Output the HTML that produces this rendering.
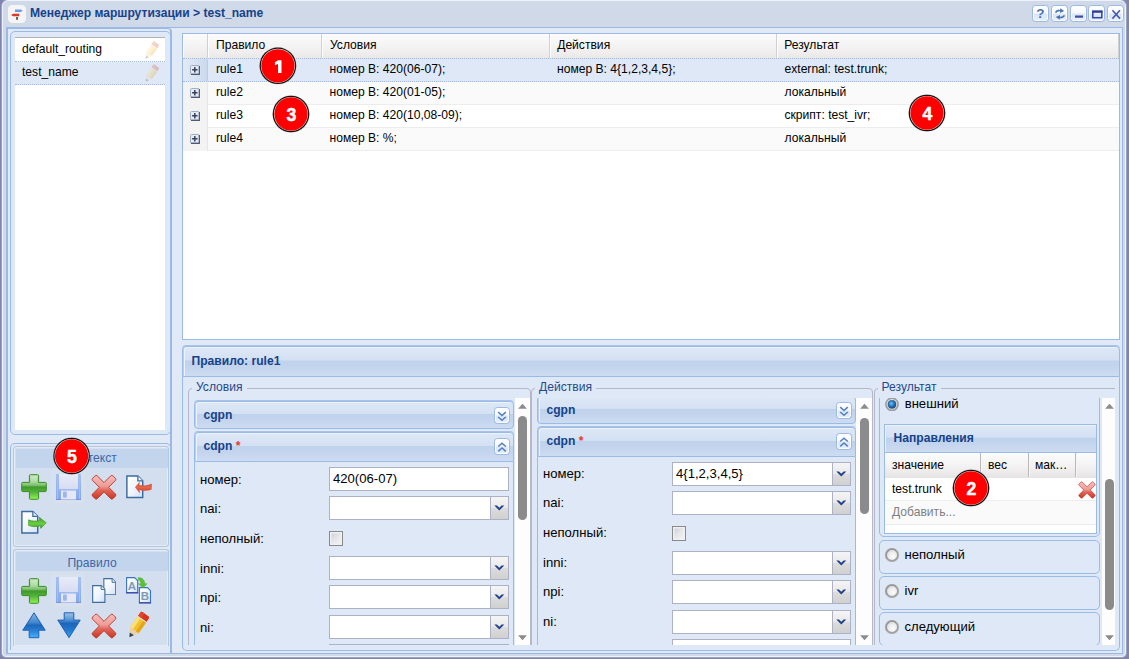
<!DOCTYPE html>
<html>
<head>
<meta charset="utf-8">
<title>Routing manager</title>
<style>
*{box-sizing:border-box;margin:0;padding:0}
html,body{width:1129px;height:659px;overflow:hidden}
body{background:#8184af;font-family:"Liberation Sans",sans-serif;font-size:12px;color:#000;position:relative}
.a{position:absolute}
.t{position:absolute;white-space:nowrap;line-height:14px;font-size:12.1px}
.t13{font-size:13.1px;line-height:15px}
.b{font-weight:bold;color:#15428b}
#win{left:2px;top:0;width:1124px;height:657px;background:#d0d9e8;border-radius:6px 6px 4px 4px;border:1px solid #eef2fc;box-shadow:0 0 0 1px rgba(158,168,192,.85)}
#winbody{left:6px;top:27px;width:1117px;height:627px;background:#e2e9f6;border:1px solid #9cb9e6;border-left-width:2px}
.hd{background:linear-gradient(#dde8f6 0%,#d4e1f3 45%,#bfd2ec 48%,#c4d5ee 72%,#cedcf1 100%);border:1px solid #99bbe8;box-shadow:0 -1px 0 #a9c3ea,inset 1px 0 0 #b9ceef,inset 2px 1px 0 #eef3fb}
.frame{border:1px solid #99bbe8;border-radius:5px;background:#dfe8f6}
.gh{top:0;height:24px;border-right:1px solid #d0d0d0;border-left:1px solid #fff}
.row{left:0;height:23px;border-top:1px solid #ededed;border-bottom:1px solid #ededed;background:#fff}
.row.alt{background:#fafafa}
.row.sel{z-index:1;background:#dfe8f6;border-top:1px dotted #a3bae9;border-bottom:1px dotted #a3bae9}
.exp{left:0;top:-1px;width:25px;height:23px;background:#f3f3f3;border-right:1px solid #e6e6e6}
.sel .exp{top:0!important;height:22px!important;background:linear-gradient(90deg,#e4ebf7,#cbd9ee);border-right-color:#b9cdef}
.badge{width:33px;height:33px;border-radius:50%;background:#fe0000;color:#fff;font-weight:bold;font-size:18px;line-height:34px;text-align:center;box-shadow:0 0 0 .7px #fff,0 0 0 1.8px #161616,0 0 0 2.4px rgba(190,190,190,.5)}
.inp{background:#fff;border:1px solid #aeb1c4;height:24px}
.trg{width:19px;height:24px;border:1px solid #aeb1c4;background:linear-gradient(#f5f5f5 0%,#e9e9e9 48%,#dcdcdc 52%,#d0d0d0 100%)}
.fs{border:1px solid #b5b8c8;border-radius:4px}
.lg{background:#dfe8f6;padding:0 4px;color:#234a8c}
.sbt{background:#fdfdfd}
.sbth{background:#8b8b8b;border-radius:5px}
.tool{width:16px;height:16px;border:1px solid #9cb8e6;border-radius:3.5px;background:linear-gradient(#ffffff 0%,#f6f9fe 48%,#d9e6fa 52%,#e6effc 100%);box-shadow:inset 0 0 0 1px rgba(255,255,255,.85)}
.rbox{border:1px solid #99bbe8;border-radius:5px;background:#dfe8f6}
.radio{width:14px;height:14px;border-radius:50%;border:2px solid #a2a2a2;border-top-color:#999;border-left-color:#999;background:radial-gradient(circle at 60% 65%,#fbfbfb 0%,#eeeeee 45%,#cfcfcf 100%)}
.cb{width:14px;height:15px;border:1px solid #8a8a8a;background:linear-gradient(135deg,#c6cad2 0%,#e6e7ea 50%,#f6f6f6 100%);box-shadow:inset 0 0 0 1.500px #f0f0f0}
.clip{overflow:hidden}
.ipanel{border:1px solid #b7c6d9;border-radius:3px;background:#d3dfef;box-shadow:inset 0 0 0 1px #e3ebf6}
.dbtn{width:34px;height:34px;border:1px solid #d9e0ea;border-radius:4px;background:rgba(220,228,240,.35)}
</style>
</head>
<body>
<svg width="0" height="0" style="position:absolute">
<defs>
<linearGradient id="gPlusV" x1="0" y1="0" x2="0" y2="1"><stop offset="0" stop-color="#c4e6bc"/><stop offset=".42" stop-color="#86c676"/><stop offset=".5" stop-color="#3f9a2c"/><stop offset=".72" stop-color="#55b53a"/><stop offset="1" stop-color="#93f555"/></linearGradient>
<linearGradient id="gX" x1="0" y1="0" x2="0" y2="1"><stop offset="0" stop-color="#f3bdbb"/><stop offset=".45" stop-color="#ee9d98"/><stop offset=".62" stop-color="#e2655a"/><stop offset="1" stop-color="#c93524"/></linearGradient>
<linearGradient id="gDoc" x1="0" y1="0" x2="1" y2="1"><stop offset="0" stop-color="#ffffff"/><stop offset=".5" stop-color="#f1f6fe"/><stop offset="1" stop-color="#cfe0fa"/></linearGradient>
<linearGradient id="gUp" x1="0" y1="0" x2="0" y2="1"><stop offset="0" stop-color="#8ab6e2"/><stop offset=".4" stop-color="#3f86cf"/><stop offset=".5" stop-color="#1c66bb"/><stop offset=".75" stop-color="#2b84d8"/><stop offset="1" stop-color="#45b6fa"/></linearGradient>
<linearGradient id="gDn" x1="0" y1="0" x2="0" y2="1"><stop offset="0" stop-color="#a3c4e6"/><stop offset=".3" stop-color="#4c8fd2"/><stop offset=".42" stop-color="#1c66bb"/><stop offset=".7" stop-color="#2379cf"/><stop offset="1" stop-color="#3aa5f5"/></linearGradient>
<linearGradient id="gFl" x1="0" y1="0" x2="0" y2="1"><stop offset="0" stop-color="#a9c0ee"/><stop offset="1" stop-color="#82a9ee"/></linearGradient>
<linearGradient id="gFl2" x1="0" y1="0" x2="0" y2="1"><stop offset="0" stop-color="#e8ebf8"/><stop offset="1" stop-color="#d6dcf2"/></linearGradient>
<linearGradient id="gGr" x1="0" y1="0" x2="0" y2="1"><stop offset="0" stop-color="#3f9f22"/><stop offset=".6" stop-color="#6bd044"/><stop offset="1" stop-color="#358f1a"/></linearGradient>
<radialGradient id="gRadio" cx=".42" cy=".4" r=".68"><stop offset="0" stop-color="#70c8fb"/><stop offset=".38" stop-color="#2f88cd"/><stop offset=".8" stop-color="#1d5089"/><stop offset="1" stop-color="#1c4a80"/></radialGradient>
<linearGradient id="gRd" x1="0" y1="0" x2="0" y2="1"><stop offset="0" stop-color="#dd4a30"/><stop offset=".5" stop-color="#e5664a"/><stop offset="1" stop-color="#cc3a26"/></linearGradient>
</defs></svg>
<div id="win" class="a"></div>
<div id="winbody" class="a"></div>
<svg class="a" style="left:8px;top:5px" width="18" height="18" viewBox="0 0 18 18"><rect width="18" height="18" rx="4.500" fill="#f5f5f5"/><path d="M7 4.400h5.800l1.900 1.350-1.900 1.350H7z" fill="#6a99f2"/><path d="M11.200 8.700H5.200L3.100 9.950l2.100 1.250h6z" fill="#e0352b"/><rect x="8.100" y="12" width="1.900" height="2.800" fill="#5a5a5a"/></svg>
<div class="t b" style="left:30px;top:5.5px;">Менеджер маршрутизации &gt; test_name</div>
<div class="a tool" style="left:1032px;top:5px;width:17px;height:17px"><svg class="a" style="left:-.5px;top:-.5px" width="16" height="16" viewBox="0 0 16 16"><text x="7.300" y="12" text-anchor="middle" font-family="Liberation Sans" font-weight="bold" font-size="13.500" fill="#4b73ad">?</text></svg></div>
<div class="a tool" style="left:1051px;top:5px;width:17px;height:17px"><svg class="a" style="left:-.5px;top:-.5px" width="16" height="16" viewBox="0 0 16 16"><path d="M3.600 6.600c1-2.200 4-2.600 6-1.300" fill="none" stroke="#4b73ad" stroke-width="1.600"/><path d="M8.300 2.300l3.900 2.700-4.200 2.100z" fill="#4b73ad"/><path d="M12.400 9.400c-1 2.200-4 2.600-6 1.300" fill="none" stroke="#4b73ad" stroke-width="1.600"/><path d="M7.700 13.700l-3.900-2.700 4.200-2.100z" fill="#4b73ad"/></svg></div>
<div class="a tool" style="left:1070px;top:5px;width:17px;height:17px"><svg class="a" style="left:-.5px;top:-.5px" width="16" height="16" viewBox="0 0 16 16"><rect x="4" y="9.500" width="8" height="2.200" fill="#3e4c9c"/></svg></div>
<div class="a tool" style="left:1088px;top:5px;width:17px;height:17px"><svg class="a" style="left:-.5px;top:-.5px" width="16" height="16" viewBox="0 0 16 16"><rect x="3.800" y="5.300" width="9" height="6.400" fill="none" stroke="#3444a0" stroke-width="1.500"/><rect x="3.100" y="4.600" width="10.400" height="2.200" fill="#2f3f9c"/></svg></div>
<div class="a tool" style="left:1107px;top:5px;width:17px;height:17px"><svg class="a" style="left:-.5px;top:-.5px" width="16" height="16" viewBox="0 0 16 16"><path d="M4.400 4.200l7.600 8.400M12 4.200l-7.600 8.400" stroke="#4a58a8" stroke-width="1.600" fill="none"/></svg></div>
<div class="a " style="left:8px;top:28px;width:164px;height:626px;border-top:1px solid #9cb9e6;border-right:2px solid #9cb9e6;border-radius:0 4px 0 0"></div>
<div class="a frame" style="left:10px;top:31px;width:161px;height:404px;"></div>
<div class="a " style="left:15px;top:37px;width:150px;height:393px;background:#fff;border-top:1px solid #b2b2b2"></div>
<div class="a " style="left:15px;top:38px;width:150px;height:24px;background:#fff;border-bottom:1px dotted #a3bae9"></div>
<div class="a " style="left:15px;top:62px;width:150px;height:23px;background:#dfe8f6;border-bottom:1px dotted #a3bae9"></div>
<div class="t " style="left:22px;top:41.5px;">default_routing</div>
<div class="t " style="left:22px;top:64.5px;">test_name</div>
<svg class="a" style="left:144px;top:41px;opacity:.24" width="15" height="19" viewBox="0 0 20 26"><g transform="rotate(35 10 13)"><path d="M5.200 2.300a1.600 1.600 0 0 1 1.600-1.600h6.400a1.600 1.600 0 0 1 1.600 1.600V6.100H5.200z" fill="#d7341d"/><path d="M5.200 2.300a1.600 1.600 0 0 1 1.600-1.600h2.200V6.100H5.200z" fill="#e0452c"/><rect x="5.200" y="6.100" width="9.600" height=".9" fill="#efe9d8"/><rect x="5.200" y="7" width="9.600" height="12" fill="#f3c12b"/><rect x="5.200" y="7" width="3.200" height="12" fill="#fbdf78"/><rect x="11.800" y="7" width="3" height="12" fill="#e3a51a"/><path d="M5.200 19h9.600L10 26.800z" fill="#ead0a6"/><path d="M7.700 23l2.300 3.900 2.300-3.900z" fill="#33414f"/></g></svg>
<svg class="a" style="left:144px;top:64px;opacity:.24" width="15" height="19" viewBox="0 0 20 26"><g transform="rotate(35 10 13)"><path d="M5.200 2.300a1.600 1.600 0 0 1 1.600-1.600h6.400a1.600 1.600 0 0 1 1.600 1.600V6.100H5.200z" fill="#d7341d"/><path d="M5.200 2.300a1.600 1.600 0 0 1 1.600-1.600h2.200V6.100H5.200z" fill="#e0452c"/><rect x="5.200" y="6.100" width="9.600" height=".9" fill="#efe9d8"/><rect x="5.200" y="7" width="9.600" height="12" fill="#f3c12b"/><rect x="5.200" y="7" width="3.200" height="12" fill="#fbdf78"/><rect x="11.800" y="7" width="3" height="12" fill="#e3a51a"/><path d="M5.200 19h9.600L10 26.800z" fill="#ead0a6"/><path d="M7.700 23l2.300 3.900 2.300-3.900z" fill="#33414f"/></g></svg>
<div class="a frame" style="left:10px;top:443px;width:161px;height:207px;border-bottom:0;border-radius:5px 5px 0 0"></div>
<div class="a ipanel" style="left:13px;top:446px;width:156px;height:101px;"></div>
<div class="a " style="left:16px;top:449px;width:152px;height:19px;background:#c3d5ed"></div>
<div class="t " style="left:16px;top:451px;width:152px;text-align:center;color:#3d66a5">Контекст</div>
<div class="a ipanel" style="left:13px;top:549px;width:156px;height:97px;border-bottom:0;border-radius:3px 3px 0 0"></div>
<div class="a " style="left:16px;top:552px;width:152px;height:19px;background:#c3d5ed"></div>
<div class="t " style="left:16px;top:555.5px;width:152px;text-align:center;color:#3d66a5">Правило</div>
<svg class="a" style="left:20.5px;top:473.7px;" width="26" height="26" viewBox="0 0 26 26"><path d="M9.400 .7h7.200a1 1 0 0 1 1 1v6.700h6.700a1 1 0 0 1 1 1v7.200a1 1 0 0 1-1 1h-6.700v6.700a1 1 0 0 1-1 1H9.400a1 1 0 0 1-1-1v-6.700H1.700a1 1 0 0 1-1-1V9.400a1 1 0 0 1 1-1h6.700V1.700a1 1 0 0 1 1-1z" fill="url(#gPlusV)" stroke="#3c8c2b" stroke-width="1"/><path d="M9.900 2h6.200v6.400h-6.200z" fill="#fff" opacity=".22"/></svg>
<div class="a dbtn" style="left:51px;top:469px;width:34px;height:34px;"></div>
<svg class="a" style="left:56px;top:474px" width="25" height="26" viewBox="0 0 25 26"><path d="M0 0h25v26H0z" fill="url(#gFl)"/><path d="M0 25h25v1H0z" fill="#7f8fe0"/><path d="M1.500 0v25M23.500 0v25" stroke="#a9bdea" stroke-width="1"/><rect x="3" y="0" width="19" height="15.200" fill="url(#gFl2)"/><rect x="5" y="16.500" width="15" height="9" fill="#e4e7f6"/><rect x="7" y="17.500" width="3.800" height="6.200" rx="1" fill="#9db6e6"/></svg>
<svg class="a" style="left:90.5px;top:473.5px;" width="26" height="26.5" viewBox="0 0 26 26"><path d="M19.65 1.69Q20.85 0.48 22.05 1.69L24.31 3.95Q25.52 5.15 24.31 6.35L17.67 13.00L24.31 19.65Q25.52 20.85 24.31 22.05L22.05 24.31Q20.85 25.52 19.65 24.31L13.00 17.67L6.35 24.31Q5.15 25.52 3.95 24.31L1.69 22.05Q0.48 20.85 1.69 19.65L8.33 13.00L1.69 6.35Q0.48 5.15 1.69 3.95L3.95 1.69Q5.15 0.48 6.35 1.69L13.00 8.33z" fill="url(#gX)" stroke="#b93623" stroke-width=".9"/></svg>
<svg class="a" style="left:126px;top:475px;" width="17.5" height="23.5" viewBox="0 0 18 24"><path d="M.9 .9h11.300l5 5V23.100H.9z" fill="url(#gDoc)" stroke="#3d6c9c" stroke-width="1.500"/><path d="M12.200 .9v5h5" fill="#e8f0fb" stroke="#3d6c9c" stroke-width="1.300"/></svg>
<svg class="a" style="left:135px;top:482.3px" width="17" height="11" viewBox="0 0 17 11"><path d="M.3 5.300L4.400 .4 4 3.300c4 .9 8.500 .5 12.600-1.300l-.3 5.400C12 8.700 8 8.600 4.100 7.700l.6 3z" fill="url(#gRd)" stroke="#d44a30" stroke-width=".5"/></svg>
<svg class="a" style="left:21px;top:510px;" width="17.5" height="24.5" viewBox="0 0 18 24"><path d="M.9 .9h11.300l5 5V23.100H.9z" fill="url(#gDoc)" stroke="#3d6c9c" stroke-width="1.500"/><path d="M12.200 .9v5h5" fill="#e8f0fb" stroke="#3d6c9c" stroke-width="1.300"/></svg>
<svg class="a" style="left:28px;top:517.3px" width="19" height="12" viewBox="0 0 19 12"><path d="M.4 2.800c3.600 1.500 7.600 1.500 11.400 .6L11.300 .3 18.300 5.800 12.700 11.400l-.4-2.700C8.200 10 4.200 10 .5 8.600z" fill="url(#gGr)" stroke="#358f1a" stroke-width=".5"/></svg>
<svg class="a" style="left:20.5px;top:577.5px;" width="26" height="26" viewBox="0 0 26 26"><path d="M9.400 .7h7.200a1 1 0 0 1 1 1v6.700h6.700a1 1 0 0 1 1 1v7.200a1 1 0 0 1-1 1h-6.700v6.700a1 1 0 0 1-1 1H9.400a1 1 0 0 1-1-1v-6.700H1.700a1 1 0 0 1-1-1V9.400a1 1 0 0 1 1-1h6.700V1.700a1 1 0 0 1 1-1z" fill="url(#gPlusV)" stroke="#3c8c2b" stroke-width="1"/><path d="M9.900 2h6.200v6.400h-6.200z" fill="#fff" opacity=".22"/></svg>
<div class="a dbtn" style="left:51px;top:572.5px;width:34px;height:34px;"></div>
<svg class="a" style="left:56px;top:577px" width="25" height="26" viewBox="0 0 25 26"><path d="M0 0h25v26H0z" fill="url(#gFl)"/><path d="M0 25h25v1H0z" fill="#7f8fe0"/><path d="M1.500 0v25M23.500 0v25" stroke="#a9bdea" stroke-width="1"/><rect x="3" y="0" width="19" height="15.200" fill="url(#gFl2)"/><rect x="5" y="16.500" width="15" height="9" fill="#e4e7f6"/><rect x="7" y="17.500" width="3.800" height="6.200" rx="1" fill="#9db6e6"/></svg>
<svg class="a" style="left:102.5px;top:577.5px;" width="13.5" height="17.5" viewBox="0 0 18 24"><path d="M.9 .9h11.300l5 5V23.100H.9z" fill="url(#gDoc)" stroke="#3d6c9c" stroke-width="1.500"/><path d="M12.200 .9v5h5" fill="#e8f0fb" stroke="#3d6c9c" stroke-width="1.300"/></svg>
<svg class="a" style="left:92px;top:585px;" width="13.5" height="18" viewBox="0 0 18 24"><path d="M.9 .9h11.300l5 5V23.100H.9z" fill="url(#gDoc)" stroke="#3d6c9c" stroke-width="1.500"/><path d="M12.200 .9v5h5" fill="#e8f0fb" stroke="#3d6c9c" stroke-width="1.300"/></svg>
<svg class="a" style="left:126px;top:577px" width="26" height="27" viewBox="0 0 26 27"><path d="M.6 .6h8l3.100 3.100V15.700H.6z" fill="url(#gDoc)" stroke="#3a70c4" stroke-width="1.100"/><path d="M.2 15.800h12" stroke="#3b3fa6" stroke-width="1.200"/><text x="5.800" y="12.800" text-anchor="middle" font-family="Liberation Sans" font-weight="bold" font-size="11.500" fill="#7d9bb3">A</text><path d="M13.400 10.600h8l3.100 3.100V25.700H13.400z" fill="url(#gDoc)" stroke="#3a70c4" stroke-width="1.100"/><path d="M13 25.900h12" stroke="#3b3fa6" stroke-width="1.200"/><text x="18.900" y="23" text-anchor="middle" font-family="Liberation Sans" font-weight="bold" font-size="11.500" fill="#7d9bb3">B</text><path d="M12.300 .5c4.200 .2 6.400 2.600 6.600 6.200h2.200L16.900 11 12.600 6.700h2.300c-.2-2-1.100-3.300-2.800-3.900z" fill="#58c232" stroke="#48aa28" stroke-width=".4"/></svg>
<svg class="a" style="left:22px;top:612px" width="24" height="26.500" viewBox="0 0 24 26.500"><path d="M12 .8L23.200 18.200H16.800v7.500H7.200v-7.500H.8z" fill="url(#gUp)" stroke="#1d5fb2" stroke-width="1" stroke-linejoin="round"/></svg>
<svg class="a" style="left:57px;top:612px" width="24" height="26.500" viewBox="0 0 24 26.500"><path d="M7.200 .8h9.600v7.300h6.400L12 25.700 .8 8.100h6.400z" fill="url(#gDn)" stroke="#1d5fb2" stroke-width="1" stroke-linejoin="round"/></svg>
<svg class="a" style="left:90.5px;top:612.5px;" width="26" height="26" viewBox="0 0 26 26"><path d="M19.65 1.69Q20.85 0.48 22.05 1.69L24.31 3.95Q25.52 5.15 24.31 6.35L17.67 13.00L24.31 19.65Q25.52 20.85 24.31 22.05L22.05 24.31Q20.85 25.52 19.65 24.31L13.00 17.67L6.35 24.31Q5.15 25.52 3.95 24.31L1.69 22.05Q0.48 20.85 1.69 19.65L8.33 13.00L1.69 6.35Q0.48 5.15 1.69 3.95L3.95 1.69Q5.15 0.48 6.35 1.69L13.00 8.33z" fill="url(#gX)" stroke="#b93623" stroke-width=".9"/></svg>
<svg class="a" style="left:126.5px;top:611px;" width="22" height="28" viewBox="0 0 20 26"><g transform="rotate(35 10 13)"><path d="M5.200 2.300a1.600 1.600 0 0 1 1.600-1.600h6.400a1.600 1.600 0 0 1 1.600 1.600V6.100H5.200z" fill="#d7341d"/><path d="M5.200 2.300a1.600 1.600 0 0 1 1.600-1.600h2.200V6.100H5.200z" fill="#e0452c"/><rect x="5.200" y="6.100" width="9.600" height=".9" fill="#efe9d8"/><rect x="5.200" y="7" width="9.600" height="12" fill="#f3c12b"/><rect x="5.200" y="7" width="3.200" height="12" fill="#fbdf78"/><rect x="11.800" y="7" width="3" height="12" fill="#e3a51a"/><path d="M5.200 19h9.600L10 26.800z" fill="#ead0a6"/><path d="M7.700 23l2.300 3.900 2.300-3.900z" fill="#33414f"/></g></svg>
<div class="a" style="left:182px;top:33px;width:938px;height:307px;border:1px solid #99bbe8;background:#fff">
<div class="a" style="left:0;top:0;width:936px;height:25px;background:linear-gradient(#fcfcfc,#f4f3f3 50%,#ebe8e8);border-bottom:1px solid #d0d0d0"></div>
<div class="a gh" style="left:0px;width:25px"></div>
<div class="a gh" style="left:25px;width:114px"></div>
<div class="t" style="left:33px;top:4px">Правило</div>
<div class="a gh" style="left:139px;width:228px"></div>
<div class="t" style="left:147px;top:4px">Условия</div>
<div class="a gh" style="left:367px;width:227px"></div>
<div class="t" style="left:374.2px;top:4px">Действия</div>
<div class="a gh" style="left:594px;width:342px"></div>
<div class="t" style="left:601.2px;top:4px">Результат</div>
<div class="a row sel" style="top:24px;width:936px;height:24px">
<div class="a exp" style="height:24px"></div>
<svg class="a" style="left:7px;top:6px" width="10" height="10" viewBox="0 0 10 10"><rect x=".5" y=".5" width="8.600" height="8.600" rx="1" fill="#e6eaf2" stroke="#a3aec1"/><path d="M1 9.400h8.400V1" fill="none" stroke="#4a5977" stroke-width="1.100"/><path d="M2.100 4.800h5.400M4.800 2.100v5.400" stroke="#34425f" stroke-width="1.500"/></svg>
<div class="t" style="left:33px;top:3px">rule1</div>
<div class="t" style="left:146.5px;top:3px">номер B: 420(06-07);</div>
<div class="t" style="left:374px;top:3px">номер B: 4{1,2,3,4,5};</div>
<div class="t" style="left:601.5px;top:3px">external: test.trunk;</div>
</div>
<div class="a row alt" style="top:47px;width:936px;height:24px">
<div class="a exp" style="height:24px"></div>
<svg class="a" style="left:7px;top:6px" width="10" height="10" viewBox="0 0 10 10"><rect x=".5" y=".5" width="8.600" height="8.600" rx="1" fill="#e6eaf2" stroke="#a3aec1"/><path d="M1 9.400h8.400V1" fill="none" stroke="#4a5977" stroke-width="1.100"/><path d="M2.100 4.800h5.400M4.800 2.100v5.400" stroke="#34425f" stroke-width="1.500"/></svg>
<div class="t" style="left:33px;top:3px">rule2</div>
<div class="t" style="left:146.5px;top:3px">номер B: 420(01-05);</div>
<div class="t" style="left:601.5px;top:3px">локальный</div>
</div>
<div class="a row " style="top:70px;width:936px;height:24px">
<div class="a exp" style="height:24px"></div>
<svg class="a" style="left:7px;top:6px" width="10" height="10" viewBox="0 0 10 10"><rect x=".5" y=".5" width="8.600" height="8.600" rx="1" fill="#e6eaf2" stroke="#a3aec1"/><path d="M1 9.400h8.400V1" fill="none" stroke="#4a5977" stroke-width="1.100"/><path d="M2.100 4.800h5.400M4.800 2.100v5.400" stroke="#34425f" stroke-width="1.500"/></svg>
<div class="t" style="left:33px;top:3px">rule3</div>
<div class="t" style="left:146.5px;top:3px">номер B: 420(10,08-09);</div>
<div class="t" style="left:601.5px;top:3px">скрипт: test_ivr;</div>
</div>
<div class="a row alt" style="top:93px;width:936px;height:24px">
<div class="a exp" style="height:24px"></div>
<svg class="a" style="left:7px;top:6px" width="10" height="10" viewBox="0 0 10 10"><rect x=".5" y=".5" width="8.600" height="8.600" rx="1" fill="#e6eaf2" stroke="#a3aec1"/><path d="M1 9.400h8.400V1" fill="none" stroke="#4a5977" stroke-width="1.100"/><path d="M2.100 4.800h5.400M4.800 2.100v5.400" stroke="#34425f" stroke-width="1.500"/></svg>
<div class="t" style="left:33px;top:3px">rule4</div>
<div class="t" style="left:146.5px;top:3px">номер B: %;</div>
<div class="t" style="left:601.5px;top:3px">локальный</div>
</div>
</div>
<div class="a hd" style="left:182px;top:346px;width:938px;height:31px;border-radius:4px 4px 0 0"></div>
<div class="t b" style="left:191.5px;top:353.5px;">Правило: rule1</div>
<div class="a " style="left:182px;top:377px;width:938px;height:274px;border:1px solid #99bbe8;border-top:0;border-radius:0 0 5px 5px;background:#dfe8f6"></div>
<div class="a clip" style="left:183px;top:377px;width:936px;height:268px"><div class="a" style="left:-183px;top:-377px;width:1129px;height:659px">
<div class="a fs" style="left:188px;top:388px;width:343px;height:269px;"></div>
<div class="t lg" style="left:192px;top:380px">Условия</div>
<div class="a clip" style="left:192px;top:398px;width:324px;height:247px">
<div class="a hd" style="left:2px;top:3px;width:320px;height:28px;border-radius:4px">
<div class="t b" style="left:8.500px;top:6px">cgpn</div>
<div class="a tool" style="left:299px;top:5px;width:16px;height:17px"><svg class="a" style="left:1px;top:1px" width="12" height="14" viewBox="0 0 12 14"><path d="M2.200 3.200l3.800 3.300 3.800-3.300M2.200 8l3.800 3.300 3.800-3.300" fill="none" stroke="#5580bb" stroke-width="1.600"/></svg></div>
</div>
<div class="a hd" style="left:2px;top:34px;width:320px;height:30px;border-radius:4px 4px 0 0">
<div class="t b" style="left:8.500px;top:6px">cdpn <span style="color:#e8392c">*</span></div>
<div class="a tool" style="left:299px;top:5px;width:16px;height:17px"><svg class="a" style="left:1px;top:1px" width="12" height="14" viewBox="0 0 12 14"><path d="M2.200 6.500l3.800-3.300 3.800 3.300M2.200 11.300l3.800-3.300 3.800 3.300" fill="none" stroke="#5580bb" stroke-width="1.600"/></svg></div>
</div>
<div class="a" style="left:2px;top:64px;width:320px;height:300px;border:1px solid #99bbe8;border-top:0;background:#dfe8f6"></div>
<div class="t t13" style="left:8px;top:74px">номер:</div>
<div class="a inp" style="left:137px;top:69px;width:180px"></div>
<div class="t t13" style="left:141px;top:73px">420(06-07)</div>
<div class="t t13" style="left:8px;top:103px">nai:</div>
<div class="a inp" style="left:137px;top:98px;width:163px"></div>
<div class="a trg" style="left:298px;top:98px"><svg class="a" style="left:3px;top:7.500px" width="11" height="7" viewBox="0 0 11 7"><path d="M.3 .4h2.700L5.300 2.700 7.600 .4h2.700L5.300 5.600z" fill="#23408c"/></svg></div>
<div class="t t13" style="left:8px;top:133px">неполный:</div>
<div class="a cb" style="left:137px;top:133px"></div>
<div class="t t13" style="left:8px;top:163px">inni:</div>
<div class="a inp" style="left:137px;top:158px;width:163px"></div>
<div class="a trg" style="left:298px;top:158px"><svg class="a" style="left:3px;top:7.500px" width="11" height="7" viewBox="0 0 11 7"><path d="M.3 .4h2.700L5.300 2.700 7.600 .4h2.700L5.300 5.600z" fill="#23408c"/></svg></div>
<div class="t t13" style="left:8px;top:192px">npi:</div>
<div class="a inp" style="left:137px;top:187px;width:163px"></div>
<div class="a trg" style="left:298px;top:187px"><svg class="a" style="left:3px;top:7.500px" width="11" height="7" viewBox="0 0 11 7"><path d="M.3 .4h2.700L5.300 2.700 7.600 .4h2.700L5.300 5.600z" fill="#23408c"/></svg></div>
<div class="t t13" style="left:8px;top:222px">ni:</div>
<div class="a inp" style="left:137px;top:217px;width:163px"></div>
<div class="a trg" style="left:298px;top:217px"><svg class="a" style="left:3px;top:7.500px" width="11" height="7" viewBox="0 0 11 7"><path d="M.3 .4h2.700L5.300 2.700 7.600 .4h2.700L5.300 5.600z" fill="#23408c"/></svg></div>
<div class="a inp" style="left:137px;top:246px;width:180px"></div>
</div>
<div class="a sbt" style="left:515px;top:398px;width:15px;height:247px;"></div>
<svg class="a" style="left:517px;top:403px" width="11" height="6" viewBox="0 0 11 6"><path d="M1.1 5.800L5.5 .8 9.9 5.800z" fill="#8b8b8b"/></svg>
<svg class="a" style="left:517px;top:635px" width="11" height="6" viewBox="0 0 11 6"><path d="M1.1 .2L5.5 5.200 9.9 .2z" fill="#8b8b8b"/></svg>
<div class="a sbth" style="left:518px;top:416px;width:9px;height:104px;"></div>
<div class="a fs" style="left:531px;top:388px;width:342px;height:269px;"></div>
<div class="t lg" style="left:535px;top:380px">Действия</div>
<div class="a clip" style="left:535px;top:398px;width:323px;height:247px">
<div class="a hd" style="left:2px;top:-2px;width:319px;height:28px;border-radius:4px">
<div class="t b" style="left:8.500px;top:6px">cgpn</div>
<div class="a tool" style="left:298px;top:5px;width:16px;height:17px"><svg class="a" style="left:1px;top:1px" width="12" height="14" viewBox="0 0 12 14"><path d="M2.200 3.200l3.800 3.300 3.800-3.300M2.200 8l3.800 3.300 3.800-3.300" fill="none" stroke="#5580bb" stroke-width="1.600"/></svg></div>
</div>
<div class="a hd" style="left:2px;top:29px;width:319px;height:30px;border-radius:4px 4px 0 0">
<div class="t b" style="left:8.500px;top:6px">cdpn <span style="color:#e8392c">*</span></div>
<div class="a tool" style="left:298px;top:5px;width:16px;height:17px"><svg class="a" style="left:1px;top:1px" width="12" height="14" viewBox="0 0 12 14"><path d="M2.200 6.500l3.800-3.300 3.800 3.300M2.200 11.300l3.800-3.300 3.800 3.300" fill="none" stroke="#5580bb" stroke-width="1.600"/></svg></div>
</div>
<div class="a" style="left:2px;top:59px;width:319px;height:300px;border:1px solid #99bbe8;border-top:0;background:#dfe8f6"></div>
<div class="t t13" style="left:8px;top:68px">номер:</div>
<div class="a inp" style="left:137px;top:64px;width:162px"></div>
<div class="a trg" style="left:297px;top:64px"><svg class="a" style="left:3px;top:7.500px" width="11" height="7" viewBox="0 0 11 7"><path d="M.3 .4h2.700L5.300 2.700 7.600 .4h2.700L5.300 5.600z" fill="#23408c"/></svg></div>
<div class="t t13" style="left:141px;top:68px">4{1,2,3,4,5}</div>
<div class="t t13" style="left:8px;top:97px">nai:</div>
<div class="a inp" style="left:137px;top:93px;width:162px"></div>
<div class="a trg" style="left:297px;top:93px"><svg class="a" style="left:3px;top:7.500px" width="11" height="7" viewBox="0 0 11 7"><path d="M.3 .4h2.700L5.300 2.700 7.600 .4h2.700L5.300 5.600z" fill="#23408c"/></svg></div>
<div class="t t13" style="left:8px;top:127px">неполный:</div>
<div class="a cb" style="left:137px;top:128px"></div>
<div class="t t13" style="left:8px;top:157px">inni:</div>
<div class="a inp" style="left:137px;top:153px;width:162px"></div>
<div class="a trg" style="left:297px;top:153px"><svg class="a" style="left:3px;top:7.500px" width="11" height="7" viewBox="0 0 11 7"><path d="M.3 .4h2.700L5.300 2.700 7.600 .4h2.700L5.300 5.600z" fill="#23408c"/></svg></div>
<div class="t t13" style="left:8px;top:186px">npi:</div>
<div class="a inp" style="left:137px;top:182px;width:162px"></div>
<div class="a trg" style="left:297px;top:182px"><svg class="a" style="left:3px;top:7.500px" width="11" height="7" viewBox="0 0 11 7"><path d="M.3 .4h2.700L5.300 2.700 7.600 .4h2.700L5.300 5.600z" fill="#23408c"/></svg></div>
<div class="t t13" style="left:8px;top:216px">ni:</div>
<div class="a inp" style="left:137px;top:212px;width:162px"></div>
<div class="a trg" style="left:297px;top:212px"><svg class="a" style="left:3px;top:7.500px" width="11" height="7" viewBox="0 0 11 7"><path d="M.3 .4h2.700L5.300 2.700 7.600 .4h2.700L5.300 5.600z" fill="#23408c"/></svg></div>
<div class="a inp" style="left:137px;top:241px;width:179px"></div>
</div>
<div class="a sbt" style="left:856px;top:398px;width:16px;height:247px;"></div>
<svg class="a" style="left:859px;top:403px" width="11" height="6" viewBox="0 0 11 6"><path d="M1.1 5.800L5.5 .8 9.9 5.800z" fill="#8b8b8b"/></svg>
<svg class="a" style="left:859px;top:635px" width="11" height="6" viewBox="0 0 11 6"><path d="M1.1 .2L5.5 5.200 9.9 .2z" fill="#8b8b8b"/></svg>
<div class="a sbth" style="left:860px;top:418px;width:9px;height:96px;"></div>
<div class="a fs" style="left:874px;top:388px;width:245px;height:269px;"></div>
<div class="t lg" style="left:877.5px;top:380px">Результат</div>
<div class="a " style="left:1115px;top:380px;width:4px;height:266px;background:#dfe8f6"></div>
<div class="a sbt" style="left:1102px;top:398px;width:13px;height:247px;"></div>
<svg class="a" style="left:1104px;top:403px" width="11" height="6" viewBox="0 0 11 6"><path d="M1.1 5.800L5.5 .8 9.9 5.800z" fill="#8b8b8b"/></svg>
<svg class="a" style="left:1104px;top:635px" width="11" height="6" viewBox="0 0 11 6"><path d="M1.1 .2L5.5 5.200 9.9 .2z" fill="#8b8b8b"/></svg>
<div class="a sbth" style="left:1105px;top:479px;width:9px;height:131px;"></div>
<div class="a clip" style="left:878px;top:398px;width:223px;height:247px">
<div class="a rbox" style="left:1px;top:-10px;width:221px;height:149px"></div>
<svg class="a" style="left:7px;top:-1px" width="14" height="14" viewBox="0 0 14 14"><circle cx="7" cy="7.300" r="6.100" fill="#ececec" stroke="#9c9c9c" stroke-width="1.600"/><circle cx="7" cy="7.400" r="4.100" fill="url(#gRadio)" stroke="#1d4c84" stroke-width=".4"/></svg>
<div class="t t13" style="left:26.700px;top:-2px">внешний</div>
<div class="a hd" style="left:6px;top:26px;width:213px;height:29px;box-shadow:inset 1px 1px 0 #eef3fb"></div>
<div class="t b" style="left:15.500px;top:33px">Направления</div>
<div class="a" style="left:6px;top:55px;width:213px;height:81px;border:1px solid #99bbe8;border-top:0;background:#fff"></div>
<div class="a" style="left:7px;top:55px;width:211px;height:25px;background:linear-gradient(#fcfcfc,#f4f3f3 50%,#e6e3e3)"></div>
<div class="a" style="left:102px;top:55px;width:2px;height:24px;border-left:1px solid #b9b9b9;border-right:1px solid #f6f6f6"></div>
<div class="a" style="left:149.5px;top:55px;width:2px;height:24px;border-left:1px solid #b9b9b9;border-right:1px solid #f6f6f6"></div>
<div class="a" style="left:197px;top:55px;width:2px;height:24px;border-left:1px solid #b9b9b9;border-right:1px solid #f6f6f6"></div>
<div class="t" style="left:14px;top:60px">значение</div>
<div class="t" style="left:110px;top:60px">вес</div>
<div class="t" style="left:157px;top:60px">мак…</div>
<div class="a" style="left:7px;top:80px;width:211px;height:23px;background:#fff;border-bottom:1px solid #ededed"></div>
<div class="t" style="left:14px;top:84px">test.trunk</div>
<svg class="a" style="left:200px;top:83px;" width="18" height="18" viewBox="0 0 26 26"><path d="M19.65 1.69Q20.85 0.48 22.05 1.69L24.31 3.95Q25.52 5.15 24.31 6.35L17.67 13.00L24.31 19.65Q25.52 20.85 24.31 22.05L22.05 24.31Q20.85 25.52 19.65 24.31L13.00 17.67L6.35 24.31Q5.15 25.52 3.95 24.31L1.69 22.05Q0.48 20.85 1.69 19.65L8.33 13.00L1.69 6.35Q0.48 5.15 1.69 3.95L3.95 1.69Q5.15 0.48 6.35 1.69L13.00 8.33z" fill="url(#gX)" stroke="#b93623" stroke-width=".9"/></svg>
<div class="a" style="left:7px;top:103px;width:211px;height:24px;background:#fafafa;border-bottom:1px solid #ededed"></div>
<div class="t" style="left:14px;top:107px;color:#7f7f7f">Добавить...</div>
<div class="a rbox" style="left:1px;top:142px;width:221px;height:34px"></div>
<div class="a radio" style="left:7px;top:150px"></div>
<div class="t t13" style="left:26.500px;top:149px">неполный</div>
<div class="a rbox" style="left:1px;top:178px;width:221px;height:34px"></div>
<div class="a radio" style="left:7px;top:186px"></div>
<div class="t t13" style="left:26.500px;top:185px">ivr</div>
<div class="a rbox" style="left:1px;top:214px;width:221px;height:34px"></div>
<div class="a radio" style="left:7px;top:222px"></div>
<div class="t t13" style="left:26.500px;top:221px">следующий</div>
</div>
</div></div>
<svg class="a" style="left:256px;top:44px;z-index:9" width="42" height="42"><circle cx="21.9" cy="21.8" r="18.800" fill="#bdbdbd" opacity=".5"/><circle cx="21.9" cy="21.8" r="18.300" fill="#141414"/><circle cx="21.9" cy="21.8" r="17.050" fill="#fff"/><circle cx="21.9" cy="21.8" r="16.650" fill="#fe0000"/><path transform="translate(21.9 21.8)" d="M.2-5.600H3.600V7.100H.1V-1.900L-3-.5V-3.500z" fill="#fff"/></svg>
<svg class="a" style="left:270px;top:93px;z-index:9" width="42" height="42"><circle cx="21" cy="21" r="18.800" fill="#bdbdbd" opacity=".5"/><circle cx="21" cy="21" r="18.300" fill="#141414"/><circle cx="21" cy="21" r="17.050" fill="#fff"/><circle cx="21" cy="21" r="16.650" fill="#fe0000"/><text x="21.35" y="28.2" text-anchor="middle" font-family="Liberation Sans" font-weight="bold" font-size="17.700" fill="#fff" stroke="#fff" stroke-width=".45">3</text></svg>
<svg class="a" style="left:906px;top:92px;z-index:9" width="42" height="42"><circle cx="21" cy="21" r="18.800" fill="#bdbdbd" opacity=".5"/><circle cx="21" cy="21" r="18.300" fill="#141414"/><circle cx="21" cy="21" r="17.050" fill="#fff"/><circle cx="21" cy="21" r="16.650" fill="#fe0000"/><text x="21.35" y="28.2" text-anchor="middle" font-family="Liberation Sans" font-weight="bold" font-size="17.700" fill="#fff" stroke="#fff" stroke-width=".45">4</text></svg>
<svg class="a" style="left:950px;top:467px;z-index:9" width="42" height="42"><circle cx="21" cy="21" r="18.800" fill="#bdbdbd" opacity=".5"/><circle cx="21" cy="21" r="18.300" fill="#141414"/><circle cx="21" cy="21" r="17.050" fill="#fff"/><circle cx="21" cy="21" r="16.650" fill="#fe0000"/><text x="21.35" y="28.2" text-anchor="middle" font-family="Liberation Sans" font-weight="bold" font-size="17.700" fill="#fff" stroke="#fff" stroke-width=".45">2</text></svg>
<svg class="a" style="left:50px;top:435px;z-index:9" width="42" height="42"><circle cx="21.6" cy="21" r="18.800" fill="#bdbdbd" opacity=".5"/><circle cx="21.6" cy="21" r="18.300" fill="#141414"/><circle cx="21.6" cy="21" r="17.050" fill="#fff"/><circle cx="21.6" cy="21" r="16.650" fill="#fe0000"/><text x="21.95" y="28.2" text-anchor="middle" font-family="Liberation Sans" font-weight="bold" font-size="17.700" fill="#fff" stroke="#fff" stroke-width=".45">5</text></svg>
</body>
</html>
